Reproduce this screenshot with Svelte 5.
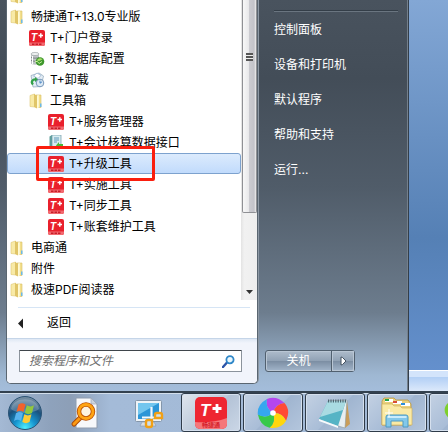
<!-- @component
The open start menu over the desktop: the program tree with its search box on the left, the
system links on the glass to the right, and the taskbar underneath. -->
<script lang="ts">
  type Icon = 'folder' | 'tplus' | 'database' | 'uninstall' | 'book';
  type Program = { label: string; icon: Icon; level: number; selected?: boolean };

  const programs: Program[] = [
    { label: '', icon: 'folder', level: 0 },
    { label: '畅捷通T+13.0专业版', icon: 'folder', level: 0 },
    { label: 'T+门户登录', icon: 'tplus', level: 1 },
    { label: 'T+数据库配置', icon: 'database', level: 1 },
    { label: 'T+卸载', icon: 'uninstall', level: 1 },
    { label: '工具箱', icon: 'folder', level: 1 },
    { label: 'T+服务管理器', icon: 'tplus', level: 2 },
    { label: 'T+会计核算数据接口', icon: 'book', level: 2 },
    { label: 'T+升级工具', icon: 'tplus', level: 2, selected: true },
    { label: 'T+实施工具', icon: 'tplus', level: 2 },
    { label: 'T+同步工具', icon: 'tplus', level: 2 },
    { label: 'T+账套维护工具', icon: 'tplus', level: 2 },
    { label: '电商通', icon: 'folder', level: 0 },
    { label: '附件', icon: 'folder', level: 0 },
    { label: '极速PDF阅读器', icon: 'folder', level: 0 },
  ];

  const links = ['控制面板', '设备和打印机', '默认程序', '帮助和支持', '运行...'];

  // Browser logo petals, clockwise from the top.
  const petals = ['#b446ee', '#ff4b35', '#ffd60c', '#37c94b', '#35a7ef'];

  let query = $state('');
</script>

{#snippet programIcon(icon: Icon)}
  <svg class="icon" viewBox="0 0 16 16" aria-hidden="true">
    {#if icon === 'folder'}
      <path d="M1 2.500 5.500 1v13L1 13.500z" fill="#f8eaa6" stroke="#dfc873" stroke-width=".6" />
      <path d="M7 2h5v12.500H7z" fill="#f3df8c" stroke="#d8bf66" stroke-width=".6" />
      <path d="M5 1l3 1.500v13l-3-1.500z" fill="#e0c568" />
      <path d="M8 2.500v13l1.800-1V2z" fill="#fffad6" />
      <path d="M11 10.500h1.500v3.500H11z" fill="#6bb9ea" />
    {:else if icon === 'tplus'}
      <rect width="16" height="16" rx="2" fill="#e9202c" />
      <path d="M0 12.500h16V14a2 2 0 0 1-2 2H2a2 2 0 0 1-2-2z" fill="#f26a70" />
      <path d="M3 14.300h10" stroke="#c71d28" stroke-width="1.500" stroke-dasharray="2.500 1" />
      <text x="2" y="11" font-size="10" class="mark">T</text>
      <path d="M9.500 5.500h4.500M11.800 3.200v4.600" stroke="#fff" stroke-width="1.500" />
    {:else if icon === 'database'}
      <path d="M2 3v9.500c0 1.500 8 1.500 8 0V3z" fill="#bfc4c6" />
      <ellipse cx="6" cy="3" rx="4" ry="1.600" fill="#edf0f0" stroke="#91989a" stroke-width=".6" />
      <path d="M2 6.200c1 1.300 7 1.300 8 0M2 9.300c1 1.300 7 1.300 8 0" fill="none" stroke="#7d8587" />
      <path d="M3.500 5v8" stroke="#fff" />
      <circle cx="11" cy="10.500" r="4.300" fill="#3f982d" />
      <path d="M8 9.500c1-2.500 4-3 5.500-1-1.500 0-3 2.500-5.500 1z" fill="#a8dd6b" />
      <path d="M6 10.500h2.500l1.500 2 3-2" fill="none" stroke="#c4ec9b" />
    {:else if icon === 'uninstall'}
      <path d="M2 3.500 10 1l4.500 3L12 14.500l-8 .5z" fill="#e4edf5" stroke="#8ea5b8" stroke-width=".7" />
      <path d="M4.500 4 8 1l4 2.500-3 3z" fill="#fff" stroke="#7b9fc4" stroke-width=".6" />
      <path d="M4 12.500C1.500 10 3.500 7 7 7.500" fill="none" stroke="#32a149" stroke-width="2.300" />
      <path d="m6 5 3.500 2.700L6 10z" fill="#32a149" />
      <circle cx="11" cy="11" r="3.800" fill="#dce9f4" stroke="#6b8db2" stroke-width=".9" />
      <path d="m11 8.500 0 2.700 2-1.400" fill="none" stroke="#3979bd" stroke-width=".9" />
    {:else}
      <path d="M1.500 1.500 4 0v12.500L1.500 14z" fill="#5f9f9b" />
      <path d="M4 0h9v12H4z" fill="#d9edf0" stroke="#6d9aa7" stroke-width=".7" />
      <path d="M6 3h5M6 5h5M6 7h3" stroke="#548fb3" stroke-width=".9" />
      <path d="M1.500 13 4 12h8v2H1.500z" fill="#356a8b" />
      <path d="m8 10.500 3-3.500v2h4v4h-4v2z" fill="#4bb836" />
    {/if}
  </svg>
{/snippet}

<div class="desktop">
  <div class="window-edge"></div>
  <main class="start-menu">
    <section class="programs">
      <div class="tree">
        <ul class="list">
          {#each programs as program}
            <li>
              <button class="row level-{program.level}" class:selected={program.selected} aria-label={program.label || '文件夹'}>
                {@render programIcon(program.icon)}
                <span>{program.label}</span>
                {#if program.selected}<i class="marker"></i>{/if}
              </button>
            </li>
          {/each}
        </ul>
        <div class="scrollbar">
          <div class="thumb"><i class="grip"></i></div>
          <svg class="scroll-down" viewBox="0 0 7 4" aria-hidden="true"><path d="M0 0h7L3.500 4z" fill="#333" /></svg>
        </div>
      </div>
      <button class="back">
        <svg viewBox="0 0 6 12" aria-hidden="true"><path d="M6 0v12L0 6z" fill="#222" /></svg>
        <span>返回</span>
      </button>
      <div class="search-area">
        <label class="search">
          <input type="text" placeholder="搜索程序和文件" aria-label="搜索程序和文件" bind:value={query} />
          <svg viewBox="0 0 13 13" aria-hidden="true">
            <path d="m1 12 4-4.500" stroke="#2d55a8" stroke-width="2.400" stroke-linecap="round" />
            <circle cx="8" cy="4.700" r="3.600" fill="#e8f6fd" stroke="#2f87c8" stroke-width="1.800" />
          </svg>
        </label>
      </div>
    </section>

    <aside class="system">
      <nav class="links">
        {#each links as link}
          <a href="#{link}">{link}</a>
        {/each}
      </nav>
      <div class="power">
        <button class="shutdown">关机</button>
        <button class="more" aria-label="更多">
          <svg viewBox="0 0 7 10" aria-hidden="true"><path d="M1 1v8l1.500-.5L6 5 2.500 1.500z" fill="#fff" stroke="#445261" /></svg>
        </button>
      </div>
    </aside>
  </main>

  <footer class="taskbar">
    <button class="orb" aria-label="开始">
      <svg viewBox="0 0 36 36" aria-hidden="true">
        <defs>
          <radialGradient id="orb" cx=".5" cy=".95" r=".9">
            <stop offset="0" stop-color="#4ff0ff" />
            <stop offset=".35" stop-color="#1695d0" />
            <stop offset=".7" stop-color="#1a517d" />
            <stop offset="1" stop-color="#728ba0" />
          </radialGradient>
        </defs>
        <circle cx="18" cy="18" r="16.500" fill="url(#orb)" stroke="#2b5375" />
        <path d="M4 14C6 1 30 1 32 14c-6 5-22 5-28 0z" fill="#fff" opacity=".24" />
        <path d="M11.500 9.500c2.500-1.700 4.500-1.700 7 0L16.500 17c-2.500-1.700-4.500-1.700-7 0z" fill="#f2622b" />
        <path d="M19.800 10.300c2.500 1.500 4.700 1.500 7.200 0L25 18c-2.500 1.500-4.700 1.500-7.200 0z" fill="#93c83e" />
        <path d="M9 18.300c2.500-1.600 4.500-1.600 7 0L14 26c-2.500-1.700-4.500-1.700-7 0z" fill="#58b3ee" />
        <path d="M17.300 19.300c2.500 1.500 4.700 1.500 7.200 0L22.500 27c-2.500 1.500-4.700 1.500-7.200 0z" fill="#fdcb36" />
      </svg>
    </button>
    <button class="pinned" aria-label="搜索文件">
      <svg viewBox="0 0 32 32" aria-hidden="true">
        <path d="M7 1h15l6 6v24H7z" fill="#f7f8fa" stroke="#8f9cae" />
        <path d="M22 1v6h6z" fill="#ccd3de" stroke="#9da8b8" stroke-width=".7" />
        <path d="m12 20-7 7" stroke="#ad4a04" stroke-width="5" stroke-linecap="round" />
        <path d="m12 20-7 7" stroke="#fb9912" stroke-width="3" stroke-linecap="round" />
        <circle cx="17" cy="14.500" r="7" fill="#fdf3e0" stroke="#b94f04" stroke-width="4.500" />
        <circle cx="17" cy="14.500" r="7" fill="none" stroke="#ffa414" stroke-width="2.800" />
      </svg>
    </button>
    <button class="pinned" aria-label="截图工具">
      <svg viewBox="0 0 32 32" aria-hidden="true">
        <path d="M9 25h12l2 4H7z" fill="#d6dde5" stroke="#8697a8" stroke-width=".6" />
        <rect x="2.500" y="3.500" width="26" height="21" rx="1" fill="#eef3f7" stroke="#8496aa" />
        <path d="M5 6h21v16H5z" fill="#2c96d7" />
        <path d="M5 6h21L5 18z" fill="#73c6ee" />
        <path d="M18.500 10v13M9 20.500h14" stroke="#f5f8fb" stroke-width="2.200" />
        <path d="M22 17.500q0-1.500 2-1.500h3q2 0 2 2v3h-7z" fill="#cfe0ee" stroke="#f0a016" stroke-width="2.400" />
        <path d="M19 23v5q0 2-2 2h-2q-2 0-2-2v-3q0-2 2-2z" fill="#cfe0ee" stroke="#f0a016" stroke-width="2.400" />
      </svg>
    </button>
    <div class="running">
      <button class="task active" aria-label="畅捷通 T+">
        <svg viewBox="0 0 32 32" aria-hidden="true">
          <rect width="32" height="32" rx="5" fill="#ee2631" />
          <path d="M0 25c9 1 22 0 32-4v6a5 5 0 0 1-5 5H5a5 5 0 0 1-5-5z" fill="#f5777a" />
          <text x="5" y="19" font-size="17" class="mark">T</text>
          <path d="M17.500 11.500h9M22 7v9" stroke="#fff" stroke-width="2.800" />
          <text x="16" y="30" font-size="6" text-anchor="middle" class="caption">畅捷通</text>
        </svg>
      </button>
      <button class="task" aria-label="浏览器">
        <svg viewBox="0 0 32 32" aria-hidden="true">
          {#each petals as fill, i}
            <path d="M16 16Q8 11 10 2 19-2 27.500 6 18.300 6.900 16 16z" {fill} transform="rotate({i * 72} 16 16)" />
          {/each}
          <circle cx="16" cy="16" r="2.800" fill="#fff" />
        </svg>
      </button>
      <button class="task" aria-label="记事本">
        <svg viewBox="0 0 32 32" aria-hidden="true">
          <path d="M28 4 31 27l-5 4-5-3z" fill="#c99d58" />
          <path d="m9 4 19-1-2 28-7-2z" fill="#e8eef0" stroke="#8b999c" stroke-width=".6" />
          <path d="M9 4h18l-8 25-19-7z" fill="#56b4c5" />
          <path d="M9 4h18l-3 9L1 20z" fill="#a9dbe2" />
          <path d="m0 22 19 7v2L0 24z" fill="#f6fafb" />
          <path d="M9 4h19" stroke="#4c6570" stroke-width="3" stroke-dasharray="1.200 1.200" />
        </svg>
      </button>
      <button class="task" aria-label="资源管理器">
        <svg viewBox="0 0 32 32" aria-hidden="true">
          <path d="M1 4 3 1h10l2 2h12l3 4v21H1z" fill="#ead17d" stroke="#bb9844" stroke-width=".8" />
          <path d="M4 2h8v3H4zM12 4h9v3h-9zM20 6h9v3h-9z" fill="#fff" />
          <path d="M4 2h4v2H4z" fill="#21a64a" />
          <path d="M12 4h4v2h-4z" fill="#d94d37" />
          <path d="M20 6h4v2h-4z" fill="#2d8fdc" />
          <path d="M1 7h10l2 2h6l2 2h10v17H1z" fill="#faeaa5" stroke="#d0b35e" stroke-width=".7" />
          <path d="M5 30V20q0-2 2-2h18q2 0 2 2v10h-5v-6H10v6z" fill="#83c8e9" stroke="#4d9ac4" />
          <path d="M6.500 20h19" stroke="#dcf5ff" stroke-width="1.600" />
          <path d="M8 12v8M4 16h8" stroke="#fff" />
        </svg>
      </button>
      <button class="task" aria-label="聊天">
        <svg viewBox="0 0 32 32" aria-hidden="true">
          <path d="M14 3c8 0 14 4 14 11s-8 12-17 10l-5 4 1-6C-3 15 2 3 14 3z" fill="#7dd02c" />
        </svg>
      </button>
    </div>
  </footer>
</div>

<style>
  :global(body) {
    margin: 0;
  }

  .desktop {
    position: relative;
    display: flex;
    flex-direction: column;
    height: 100vh;
    overflow: hidden;
    background: linear-gradient(#83a7d5, #5580b5 55%, #6692d0 90%);
    font: 12px/18px Inter, 'Noto Sans CJK SC', sans-serif;
    color: #000;
  }

  /* Bottom border of the window that lies behind the menu. */
  .window-edge {
    position: absolute;
    right: 0;
    bottom: 41px;
    left: 0;
    height: 20px;
    border-top: 1px solid #fff;
    background: linear-gradient(#d3e4fb 30%, #b2cff5 31%, #dce9fb);
  }

  button {
    margin: 0;
    padding: 0;
    border: 0;
    background: none;
    color: inherit;
    font: inherit;
  }

  svg {
    display: block;
    flex: none;
  }

  .start-menu {
    position: relative;
    display: flex;
    flex: 1;
    min-height: 0;
    box-sizing: border-box;
    width: calc(100% - 39px);
    padding: 0 0 7px 6px;
    border-right: 1px solid #333e4a;
    background: linear-gradient(#49535e, #434d58 20%, #505c69 48%, #6d7d8e 80%, #9fb8d3 96%, #a4bddb);
    box-shadow: inset -1px 0 #75808b;
  }

  .programs {
    display: flex;
    flex: none;
    flex-direction: column;
    width: 250px;
    border: 1px solid #5a6671;
    border-top: 0;
    border-radius: 0 0 5px 5px;
    background: #fff;
    box-shadow: 1px 0 #8d98a4;
    overflow: hidden;
  }

  .tree {
    display: flex;
    flex: 1;
    min-height: 0;
  }

  /* Scrolled to its end, so the rows are clipped at the top. */
  .list {
    display: flex;
    flex: 1;
    flex-direction: column;
    justify-content: flex-end;
    margin: 0;
    padding: 0;
    overflow: hidden;
    list-style: none;
  }

  .row {
    position: relative;
    display: flex;
    align-items: center;
    gap: 5px;
    box-sizing: border-box;
    width: 100%;
    height: 21px;
    border: 1px solid transparent;
    border-radius: 3px;
    white-space: nowrap;
  }

  .level-0 {
    padding-left: 2px;
  }

  .level-1 {
    padding-left: 21px;
  }

  .level-2 {
    padding-left: 40px;
  }

  .icon {
    width: 16px;
    height: 16px;
  }

  .selected {
    z-index: 1;
    border-color: #7da2ce;
    background: linear-gradient(#dcebfd, #c1dbfc);
  }

  .marker {
    position: absolute;
    top: -8px;
    left: 28px;
    width: 113px;
    height: 29px;
    border: 3px solid #fa1e0e;
    border-radius: 2px;
  }

  .mark {
    fill: #fff;
    font-family: 'Liberation Sans', sans-serif;
    font-style: italic;
    font-weight: 700;
  }

  .caption {
    fill: #d51f2b;
    font-family: 'Noto Sans CJK SC', sans-serif;
    font-weight: 700;
  }

  .scrollbar {
    display: flex;
    flex-direction: column;
    align-items: center;
    justify-content: space-between;
    width: 16px;
    background: linear-gradient(90deg, #e3e3e3, #f1f1f1 20%, #eee);
  }

  .thumb {
    display: flex;
    justify-content: center;
    box-sizing: border-box;
    width: 15px;
    height: 71%;
    padding-top: 53px;
    border: 1px solid #8f9094;
    border-top: 0;
    border-radius: 0 0 2px 2px;
    background: linear-gradient(90deg, #f8f8f8, #e8e8ea 45%, #cbcbd0 50%, #c3c3c9 85%, #eee);
  }

  .grip {
    width: 7px;
    height: 8px;
    background: repeating-linear-gradient(#555 0 2px, #eee 2px 3px);
  }

  .scroll-down {
    width: 7px;
    height: 4px;
    margin-bottom: 6px;
  }

  .back {
    display: flex;
    align-items: center;
    gap: 24px;
    height: 31px;
    margin: 7px 7px 0 11px;
    border-top: 1px solid #d6e5f5;
  }

  .back svg {
    width: 5px;
    height: 11px;
  }

  .search-area {
    padding: 11px 15px 11px 12px;
    border-top: 1px solid #c5d5e8;
    background: linear-gradient(#dfe8f4, #f1f4fb 4px);
  }

  .search {
    display: flex;
    align-items: center;
    box-sizing: border-box;
    height: 22px;
    padding: 0 6px 0 9px;
    border: 1px solid #8b939c;
    border-top-color: #3f454b;
    border-radius: 1px;
    background: #fff;
  }

  .search input {
    flex: 1;
    min-width: 0;
    height: 18px;
    padding: 0;
    border: 0;
    outline: 0;
    background: none;
    font: inherit;
  }

  .search input::placeholder {
    color: #6d6d6d;
    font-style: italic;
    opacity: 1;
  }

  .search svg {
    width: 13px;
    height: 13px;
  }

  .system {
    display: flex;
    flex: 1;
    flex-direction: column;
    justify-content: space-between;
    padding: 10px 10px 12px 7px;
    color: #fff;
  }

  .links {
    display: flex;
    flex-direction: column;
    margin-left: 9px;
    border-top: 1px solid #343e48;
    box-shadow: inset 0 1px #6a7580;
  }

  .links a {
    height: 35px;
    color: inherit;
    line-height: 37px;
    text-decoration: none;
  }

  .power {
    display: flex;
    width: 90px;
    height: 22px;
    box-sizing: border-box;
    border: 1px solid #51606f;
    border-radius: 3px;
    background: linear-gradient(#aebccb, #91a2b5 48%, #7b8da2 50%, #a2b5ca);
    box-shadow: inset 0 0 0 1px #b9c6d4;
  }

  .shutdown {
    flex: 1;
    border-right: 1px solid #51606f;
    line-height: 20px;
  }

  .more {
    display: flex;
    align-items: center;
    justify-content: center;
    width: 22px;
    box-shadow: inset 0 0 0 1px #b9c6d4;
  }

  .more svg {
    width: 7px;
    height: 10px;
  }

  .taskbar {
    position: relative;
    display: flex;
    flex: none;
    align-items: center;
    box-sizing: border-box;
    height: 41px;
    padding-left: 7px;
    border-top: 2px solid #33414f;
    background: linear-gradient(90deg, #a4b9d4, #8ea2bc 50px, #8d9fb7 70px, #a4bbd8 110px, #a2b9d6);
    box-shadow: inset 0 1px #d3dfec;
  }

  .orb svg {
    width: 36px;
    height: 36px;
  }

  .pinned {
    display: flex;
    justify-content: center;
    width: 64px;
  }

  .pinned:nth-child(2) {
    margin-left: 10px;
  }

  .pinned svg,
  .task svg {
    width: 32px;
    height: 32px;
  }

  .running {
    display: flex;
    flex: 1;
    gap: 2px;
    height: 100%;
    overflow: hidden;
  }

  .task {
    display: flex;
    flex: none;
    align-items: center;
    justify-content: center;
    box-sizing: border-box;
    width: 60px;
    border: 1px solid #2f3b49;
    border-radius: 3px;
    background: linear-gradient(135deg, #c3d1e3, #a9bdd7 50%, #a0b5d0 51%, #b4c6dd);
    box-shadow: inset 0 0 0 1px #d5e0ee;
  }

  .active {
    background: linear-gradient(135deg, #dfe5ed, #bccadb 50%, #b3c2d6 51%, #cbd7e6);
  }
</style>
